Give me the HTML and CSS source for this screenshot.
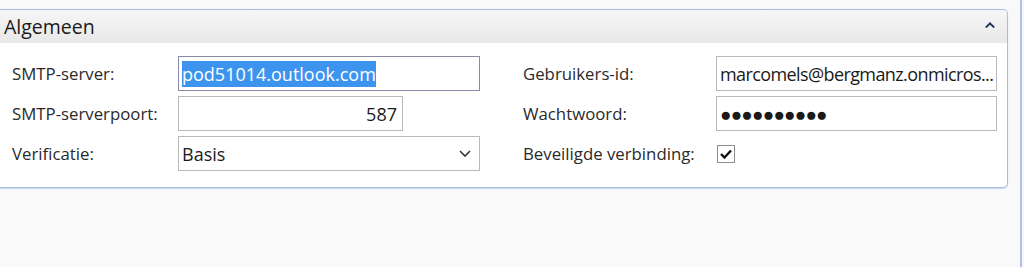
FILE: index.html
```html
<!DOCTYPE html>
<html lang="nl">
<head>
    <meta charset="UTF-8">
    <title>Algemeen</title>
    <link rel="stylesheet" href="styles.css">
</head>
<body>

    <div class="window">
        <section class="panel">
            <header class="panel-head">
                <span class="panel-title">Algemeen</span>
                <svg class="collapse" viewBox="0 0 10 6" width="10" height="6">
                    <path d="M0 5 L5 0 L10 5 L8.4 6 L5 2.8 L1.6 6 Z"></path>
                </svg>
            </header>

            <div class="form">
                <label class="lbl">SMTP-server:</label>
                <div class="field focus"><span class="sel">pod51014.outlook.com</span></div>
                <span></span>
                <label class="lbl">Gebruikers-id:</label>
                <div class="field long">marcomels@bergmanz.onmicros...</div>

                <label class="lbl">SMTP-serverpoort:</label>
                <div class="field short num">587</div>
                <span></span>
                <label class="lbl">Wachtwoord:</label>
                <div class="field dots">●●●●●●●●●●</div>

                <label class="lbl">Verificatie:</label>
                <div class="field select">
                    <span>Basis</span>
                    <svg viewBox="0 0 12 7" width="12" height="7">
                        <path d="M1 1 L6 6 L11 1"></path>
                    </svg>
                </div>
                <span></span>
                <label class="lbl">Beveiligde verbinding:</label>
                <div class="check-cell">
                    <span class="check">
                        <svg viewBox="0 0 12 10" width="12" height="10">
                            <path d="M1 5 L4.5 8.5 L11 1.5"></path>
                        </svg>
                    </span>
                </div>
            </div>
        </section>
    </div>

</body>
</html>
```

FILE: styles.css
```css
*{
    box-sizing: border-box;
}

body{
    margin: 0;
    background: #f9f9f9;
    font-family: "Open Sans", "Noto Sans", sans-serif;
    color: #222;
}

.window{
    height: 267px;
    width: 1022px;
    border-right: 2px solid #a9c2e6;
    padding-top: 9px;
}

.panel{
    width: 1008px;
    background: #fff;
    border: 1px solid #a7bde0;
    border-left: none;
    border-radius: 0 5px 5px 0;
    box-shadow: 0 1px 1px #c9d7ee;
}

.panel-head{
    display: flex;
    align-items: center;
    justify-content: space-between;
    height: 33px;
    padding: 0 12px 0 4px;
    background: linear-gradient(#f6f6f6, #e8e8e8);
    border-radius: 0 5px 0 0;
}

.panel-title{
    font-size: 19.5px;
    color: #1a1a1a;
}

.collapse{
    fill: #1b2f5e;
    margin-top: -3px;
}

.form{
    display: grid;
    grid-template-columns: 166px 302px 43px 193px 281px;
    grid-auto-rows: 35px;
    row-gap: 5px;
    padding: 13px 0 16px 12px;
}

.lbl{
    display: flex;
    align-items: center;
    font-size: 16.8px;
    color: #2a2a2a;
}

.field{
    display: flex;
    align-items: center;
    border: 1px solid #b9b9b9;
    padding: 0 3px;
    font-size: 18px;
    color: #1a1a1a;
    white-space: nowrap;
    overflow: hidden;
}

.field.focus{
    border-color: #8a8aa8;
}

.sel{
    background: #3d94ee;
    color: #fff;
    padding: 1px 0;
}

.field.long{
    letter-spacing: -0.6px;
}

.field.short{
    width: 225px;
}

.field.num{
    justify-content: flex-end;
    padding-right: 5px;
}

.field.dots{
    font-size: 19px;
    letter-spacing: -0.8px;
}

.field.select{
    justify-content: space-between;
    padding-right: 8px;
}

.field.select svg{
    fill: none;
    stroke: #333;
    stroke-width: 1.6;
}

.check-cell{
    display: flex;
    align-items: center;
}

.check{
    display: flex;
    align-items: center;
    justify-content: center;
    width: 18px;
    height: 18px;
    border: 1px solid #8e8e8e;
    margin-left: 1px;
}

.check svg{
    fill: none;
    stroke: #111;
    stroke-width: 2.4;
}
```
